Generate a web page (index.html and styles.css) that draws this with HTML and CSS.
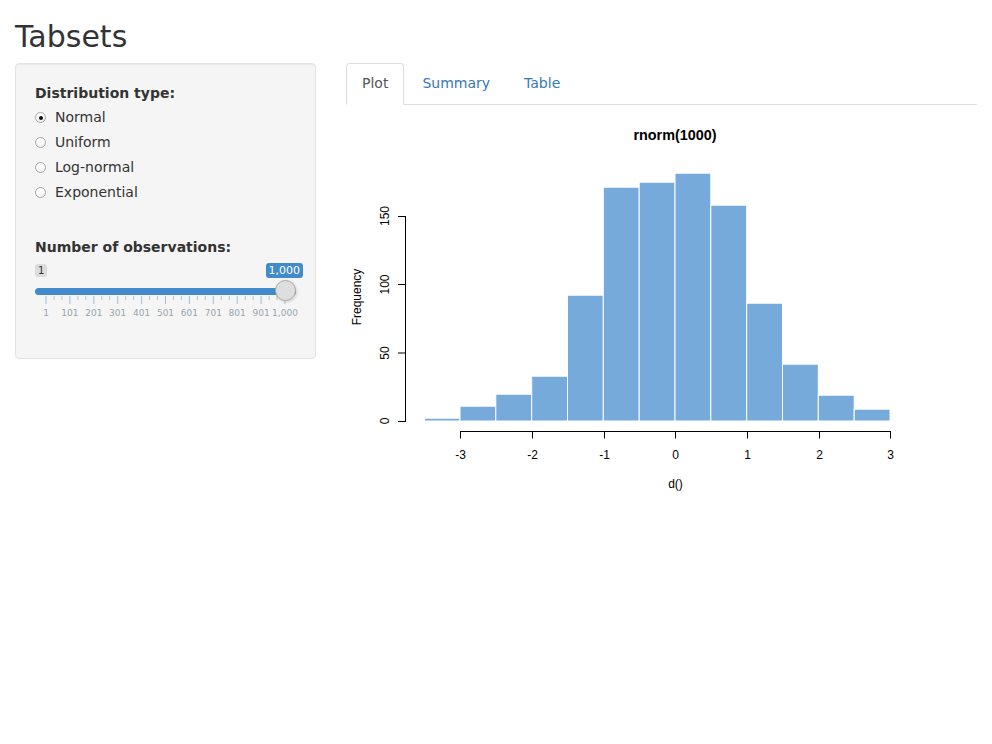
FILE: index.html
```html
<!DOCTYPE html>
<html>
<head>
<meta charset="utf-8">
<title>Tabsets</title>
<link rel="stylesheet" href="styles.css">
</head>
<body>
<div class="page">
  <h2 class="title">Tabsets</h2>
  <div class="row">
    <div class="well">
      <div class="label">Distribution type:</div>
      <div class="radios">
        <div class="radio"><span class="dot checked"></span><span>Normal</span></div>
        <div class="radio"><span class="dot"></span><span>Uniform</span></div>
        <div class="radio"><span class="dot"></span><span>Log-normal</span></div>
        <div class="radio"><span class="dot"></span><span>Exponential</span></div>
      </div>
      <div class="label label-obs">Number of observations:</div>
      <div class="slider">
        <div class="slider-labels">
          <span class="irs-min">1</span>
          <span class="irs-single">1,000</span>
        </div>
        <div class="track">
          <span class="handle"></span>
        </div>
        <svg class="grid" width="261" height="26" viewBox="0 0 261 26">
          <g class="major">
            <rect x="10.5" y="0" width="1" height="8"/>
            <rect x="34.4" y="0" width="1" height="8"/>
            <rect x="58.3" y="0" width="1" height="8"/>
            <rect x="82.2" y="0" width="1" height="8"/>
            <rect x="106.1" y="0" width="1" height="8"/>
            <rect x="130" y="0" width="1" height="8"/>
            <rect x="153.9" y="0" width="1" height="8"/>
            <rect x="177.8" y="0" width="1" height="8"/>
            <rect x="201.7" y="0" width="1" height="8"/>
            <rect x="225.6" y="0" width="1" height="8"/>
            <rect x="249.5" y="0" width="1" height="8"/>
          </g>
          <g class="minor">
            <rect x="18.5" y="0" width="1" height="4"/><rect x="26.4" y="0" width="1" height="4"/>
            <rect x="42.4" y="0" width="1" height="4"/><rect x="50.3" y="0" width="1" height="4"/>
            <rect x="66.3" y="0" width="1" height="4"/><rect x="74.2" y="0" width="1" height="4"/>
            <rect x="90.2" y="0" width="1" height="4"/><rect x="98.1" y="0" width="1" height="4"/>
            <rect x="114.1" y="0" width="1" height="4"/><rect x="122" y="0" width="1" height="4"/>
            <rect x="138" y="0" width="1" height="4"/><rect x="145.9" y="0" width="1" height="4"/>
            <rect x="161.9" y="0" width="1" height="4"/><rect x="169.8" y="0" width="1" height="4"/>
            <rect x="185.8" y="0" width="1" height="4"/><rect x="193.7" y="0" width="1" height="4"/>
            <rect x="209.7" y="0" width="1" height="4"/><rect x="217.6" y="0" width="1" height="4"/>
            <rect x="233.6" y="0" width="1" height="4"/><rect x="241.5" y="0" width="1" height="4"/>
          </g>
          <g class="gridtext">
            <text x="11" y="19.5">1</text>
            <text x="34.9" y="19.5">101</text>
            <text x="58.8" y="19.5">201</text>
            <text x="82.7" y="19.5">301</text>
            <text x="106.6" y="19.5">401</text>
            <text x="130.5" y="19.5">501</text>
            <text x="154.4" y="19.5">601</text>
            <text x="178.3" y="19.5">701</text>
            <text x="202.2" y="19.5">801</text>
            <text x="226.1" y="19.5">901</text>
            <text x="250" y="19.5">1,000</text>
          </g>
        </svg>
      </div>
    </div>
    <div class="main">
      <ul class="tabs">
        <li class="tab active">Plot</li>
        <li class="tab">Summary</li>
        <li class="tab">Table</li>
      </ul>
      <svg class="plot" width="631" height="400" viewBox="0 0 631 400">
        <g transform="translate(-346 -105)">
          <text class="ptitle" x="675" y="140">rnorm(1000)</text>
          <g class="bars">
            <rect x="424.5" y="418.2" width="35.5" height="2.8"/>
            <rect x="460" y="406.2" width="35.8" height="14.8"/>
            <rect x="495.8" y="394.2" width="35.9" height="26.8"/>
            <rect x="531.7" y="376.2" width="35.8" height="44.8"/>
            <rect x="567.5" y="295.2" width="35.8" height="125.8"/>
            <rect x="603.3" y="187.2" width="35.9" height="233.8"/>
            <rect x="639.2" y="182.2" width="35.8" height="238.8"/>
            <rect x="675" y="173.2" width="35.8" height="247.8"/>
            <rect x="710.8" y="205.2" width="35.9" height="215.8"/>
            <rect x="746.7" y="303.2" width="35.8" height="117.8"/>
            <rect x="782.5" y="364.2" width="35.8" height="56.8"/>
            <rect x="818.3" y="395.2" width="35.9" height="25.8"/>
            <rect x="854.2" y="409.2" width="35.8" height="11.8"/>
          </g>
          <g class="axis">
            <line x1="405.5" y1="216" x2="405.5" y2="422"/>
            <line x1="398" y1="421.5" x2="405.5" y2="421.5"/>
            <line x1="398" y1="353" x2="405.5" y2="353"/>
            <line x1="398" y1="284.5" x2="405.5" y2="284.5"/>
            <line x1="398" y1="216.5" x2="405.5" y2="216.5"/>
            <line x1="460" y1="431.5" x2="891" y2="431.5"/>
            <line x1="460.5" y1="431.5" x2="460.5" y2="438.5"/>
            <line x1="532.5" y1="431.5" x2="532.5" y2="438.5"/>
            <line x1="604.5" y1="431.5" x2="604.5" y2="438.5"/>
            <line x1="675.5" y1="431.5" x2="675.5" y2="438.5"/>
            <line x1="747.5" y1="431.5" x2="747.5" y2="438.5"/>
            <line x1="819.5" y1="431.5" x2="819.5" y2="438.5"/>
            <line x1="890.5" y1="431.5" x2="890.5" y2="438.5"/>
          </g>
          <g class="ticklab">
            <text transform="translate(389 421) rotate(-90)">0</text>
            <text transform="translate(389 353) rotate(-90)">50</text>
            <text transform="translate(389 284.5) rotate(-90)">100</text>
            <text transform="translate(389 216) rotate(-90)">150</text>
            <text x="460.5" y="459">-3</text>
            <text x="532.5" y="459">-2</text>
            <text x="604.5" y="459">-1</text>
            <text x="675.5" y="459">0</text>
            <text x="747.5" y="459">1</text>
            <text x="819.5" y="459">2</text>
            <text x="890.5" y="459">3</text>
            <text transform="translate(360.5 297) rotate(-90)">Frequency</text>
            <text x="675.5" y="488">d()</text>
          </g>
        </g>
      </svg>
    </div>
  </div>
</div>
</body>
</html>
```

FILE: styles.css
```css
html, body {
  margin: 0;
  padding: 0;
  background: #fff;
}

body {
  font-family: "DejaVu Sans", sans-serif;
  font-size: 14px;
  line-height: 20px;
  color: #333;
}

.page {
  padding: 0 15px;
}

.title {
  font-size: 30px;
  font-weight: 500;
  line-height: 33px;
  margin: 20px 0 10px;
}

.row {
  display: grid;
  grid-template-columns: 301px 631px;
  column-gap: 30px;
  align-items: start;
}

.well {
  background: #f5f5f5;
  border: 1px solid #e3e3e3;
  border-radius: 4px;
  box-shadow: inset 0 1px 1px rgba(0, 0, 0, 0.05);
  padding: 19px;
}

.label {
  font-weight: bold;
  height: 20px;
}

.radios {
  display: flex;
  flex-direction: column;
  gap: 5px;
  margin-top: 4px;
}

.radio {
  display: flex;
  align-items: center;
  height: 20px;
}

.dot {
  box-sizing: border-box;
  width: 11px;
  height: 11px;
  border-radius: 50%;
  border: 1px solid #a9a9a9;
  background: radial-gradient(circle at 50% 35%, #ffffff 30%, #e6e6e6 100%);
  margin-right: 9px;
  margin-top: 1px;
  display: flex;
  align-items: center;
  justify-content: center;
}

.dot.checked::after {
  content: "";
  width: 4px;
  height: 4px;
  border-radius: 50%;
  background: #111;
}

.label-obs {
  margin-top: 35px;
}

.slider {
  margin-top: 5px;
  margin-bottom: 17px;
}

.slider-labels {
  display: flex;
  justify-content: space-between;
  align-items: center;
  height: 16px;
  margin-top: 0;
  margin-right: -7px;
}

.irs-min {
  font-size: 10px;
  line-height: 13px;
  height: 13px;
  padding: 0 3px;
  background: rgba(0, 0, 0, 0.1);
  border-radius: 3px;
  color: #333;
}

.irs-single {
  font-size: 11px;
  line-height: 15px;
  height: 15px;
  padding: 0 3px;
  background: #428bca;
  border-radius: 3px;
  color: #fff;
}

.track {
  position: relative;
  margin-top: 10px;
  height: 7px;
  border-radius: 4px;
  background: #428bca;
}

.handle {
  position: absolute;
  right: 0;
  top: -8px;
  width: 21px;
  height: 21px;
  box-sizing: border-box;
  border-radius: 50%;
  background: #dedede;
  border: 1px solid #aaa;
  box-shadow: 1px 1px 3px rgba(0, 0, 0, 0.15);
}

.grid {
  display: block;
  margin-top: 1px;
  overflow: visible;
}

.grid .major rect {
  fill: #9dc0df;
}

.grid .minor rect {
  fill: #c4c4c4;
}

.gridtext text {
  font-family: "DejaVu Sans", sans-serif;
  font-size: 9px;
  fill: #99a4ac;
  text-anchor: middle;
}

.main {
  min-width: 0;
}

.tabs {
  display: flex;
  list-style: none;
  margin: 0;
  padding: 0;
  border-bottom: 1px solid #ddd;
}

.tab {
  margin-right: 2px;
  margin-bottom: -1px;
  padding: 9px 15px 11px;
  line-height: 20px;
  border: 1px solid transparent;
  border-radius: 4px 4px 0 0;
  color: #337ab7;
}

.tab.active {
  color: #555;
  background: #fff;
  border-color: #ddd #ddd transparent;
}

.plot {
  display: block;
}

.plot text {
  font-family: "Liberation Sans", Arial, sans-serif;
  font-size: 12px;
  fill: #000;
  text-anchor: middle;
}

.plot .ptitle {
  font-size: 14.4px;
  font-weight: bold;
}

.bars rect {
  fill: #75aadb;
  stroke: #fff;
  stroke-width: 1;
}

.axis line {
  stroke: #000;
  stroke-width: 1;
}
```
